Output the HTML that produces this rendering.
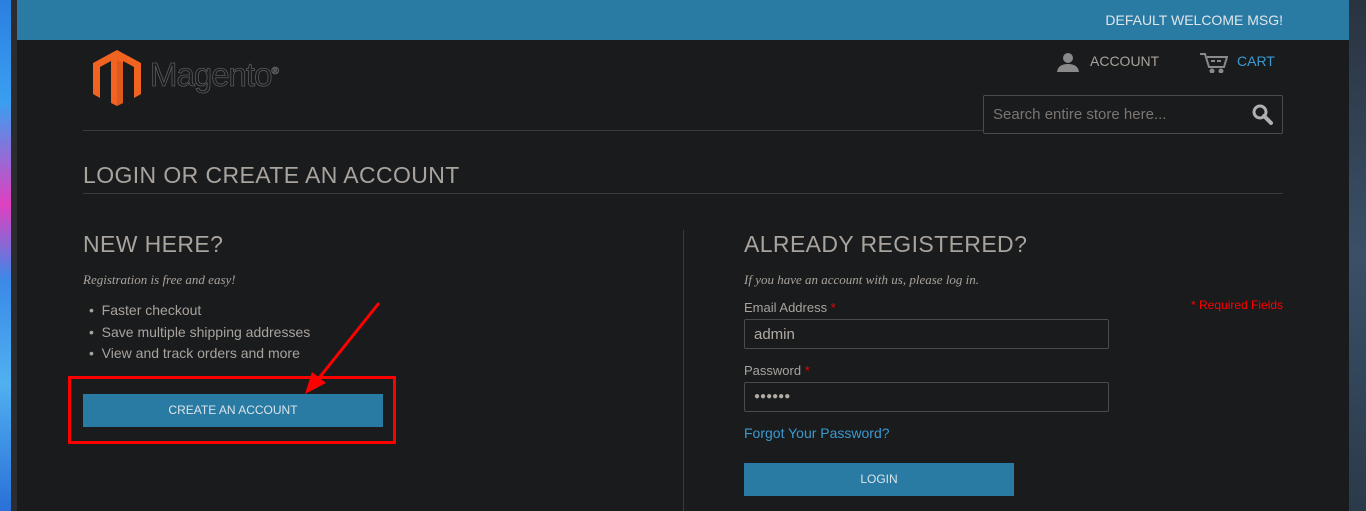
<!DOCTYPE html>
<html><head><style>
*{margin:0;padding:0;box-sizing:border-box}
body{width:1366px;height:511px;overflow:hidden;background:#1a1b1d;font-family:"Liberation Sans",sans-serif;position:relative}
.ls{position:absolute;left:0;top:0;width:11px;height:511px;background:linear-gradient(180deg,#2b7fe0,#3a9ff0 20%,#e040c0 40%,#3a8ae8 55%,#50b0f0 75%,#2a70d8)}
.ls2{position:absolute;left:11px;top:0;width:6px;height:511px;background:#2a2c30}
.rs{position:absolute;left:1349px;top:0;width:17px;height:511px;background:linear-gradient(180deg,#2a3340,#3a5068 50%,#2a3a4a)}
.top{position:absolute;left:17px;top:0;width:1332px;height:40px;background:#2a7ba4;color:#dfe6ea;font-size:14px;text-align:right;padding:12px 66px 0 0}
.a{position:absolute;color:#a8a39d}
.t{position:absolute;font-size:14px}
.line{position:absolute;height:1px;background:#3a3b3d}
.in{position:absolute;border:1px solid #4a4b4d;border-radius:2px;background:#1a1b1d;color:#b0aba5;font-size:15px;padding:6px 9px}
.btn{position:absolute;background:#2a7ba4;color:#dbe4ea;font-size:12px;text-align:center}
i.it{font-family:"Liberation Serif",serif;font-size:13px}
h{position:absolute;color:#a8a39d;font-size:23px;letter-spacing:0.4px}
</style></head><body>
<div class="ls"></div><div class="ls2"></div><div class="rs"></div>
<div class="top">DEFAULT WELCOME MSG!</div>
<svg style="position:absolute;left:93px;top:50px" width="50" height="56" viewBox="0 0 50 56">
<polygon points="24,0 48,13 48,44 41,48 41,17 30,11 30,53 24,56 18,53 18,11 7,17 7,48 0,44 0,13" fill="#f26322"/>
<polygon points="24,10 30,13 30,53 24,56" fill="#c94f1a" opacity=".5"/>
</svg>
<div class="t" style="left:150px;top:56px;font-size:33px;color:#1a1b1d;-webkit-text-stroke:0.8px #5a5b5d;letter-spacing:-1px">Magento<sup style="font-size:10px">®</sup></div>
<svg style="position:absolute;left:1057px;top:52px" width="22" height="20" viewBox="0 0 22 20"><circle cx="11" cy="6" r="5" fill="#8a8a8a"/><path d="M0 20 Q1 12 11 12 Q21 12 22 20Z" fill="#8a8a8a"/></svg>
<div class="t a" style="left:1090px;top:53px">ACCOUNT</div>
<svg style="position:absolute;left:1200px;top:53px" width="28" height="20" viewBox="0 0 28 20" fill="none" stroke="#8a8a8a" stroke-width="2"><path d="M0 1h5l4 13h15l3-10H7"/><rect x="11" y="7" width="4" height="2" fill="#8a8a8a" stroke="none"/><rect x="17" y="7" width="4" height="2" fill="#8a8a8a" stroke="none"/><circle cx="12" cy="18" r="1.5" fill="#8a8a8a"/><circle cx="21" cy="18" r="1.5" fill="#8a8a8a"/></svg>
<div class="t" style="left:1237px;top:53px;color:#3a9ad0">CART</div>
<div class="in" style="left:983px;top:95px;width:300px;height:39px;padding:10px 9px;color:#7a7672">Search entire store here...</div>
<svg style="position:absolute;left:1252px;top:104px" width="21" height="21" viewBox="0 0 21 21"><circle cx="8" cy="8" r="6" stroke="#b0b0b0" stroke-width="3" fill="none"/><path d="M12 12l7 7" stroke="#b0b0b0" stroke-width="4" stroke-linecap="round"/></svg>
<div class="line" style="left:83px;top:130px;width:900px"></div>
<h style="left:83px;top:162px">LOGIN OR CREATE AN ACCOUNT</h>
<div class="line" style="left:83px;top:193px;width:1200px"></div>
<div style="position:absolute;left:683px;top:230px;width:1px;height:281px;background:#3a3b3d"></div>
<h style="left:83px;top:231px">NEW HERE?</h>
<div class="t a" style="left:83px;top:271px"><i class="it">Registration is free and easy!</i></div>
<div class="t a" style="left:89px;top:300px;line-height:21.5px">• &nbsp;Faster checkout<br>• &nbsp;Save multiple shipping addresses<br>• &nbsp;View and track orders and more</div>
<div style="position:absolute;left:68px;top:376px;width:328px;height:68px;border:3px solid #f00"></div>
<div class="btn" style="left:83px;top:394px;width:300px;height:33px;line-height:33px">CREATE AN ACCOUNT</div>
<svg style="position:absolute;left:300px;top:300px" width="85" height="100"><line x1="79" y1="3" x2="15" y2="83" stroke="#f00" stroke-width="3"/><polygon points="5,94 12,72 26,83" fill="#f00"/></svg>
<h style="left:744px;top:231px">ALREADY REGISTERED?</h>
<div class="t a" style="left:744px;top:271px"><i class="it">If you have an account with us, please log in.</i></div>
<div class="t a" style="left:744px;top:300px;font-size:13px">Email Address <span style="color:#e00">*</span></div>
<div class="t" style="left:1191px;top:298px;font-size:12px;color:#f00">* Required Fields</div>
<div class="in" style="left:744px;top:319px;width:365px;height:30px">admin</div>
<div class="t a" style="left:744px;top:363px;font-size:13px">Password <span style="color:#e00">*</span></div>
<div class="in" style="left:744px;top:382px;width:365px;height:30px;font-size:10px;padding-top:8px">●●●●●●</div>
<div class="t" style="left:744px;top:425px;color:#3a9ad0">Forgot Your Password?</div>
<div class="btn" style="left:744px;top:463px;width:270px;height:33px;line-height:33px">LOGIN</div>
</body></html>
